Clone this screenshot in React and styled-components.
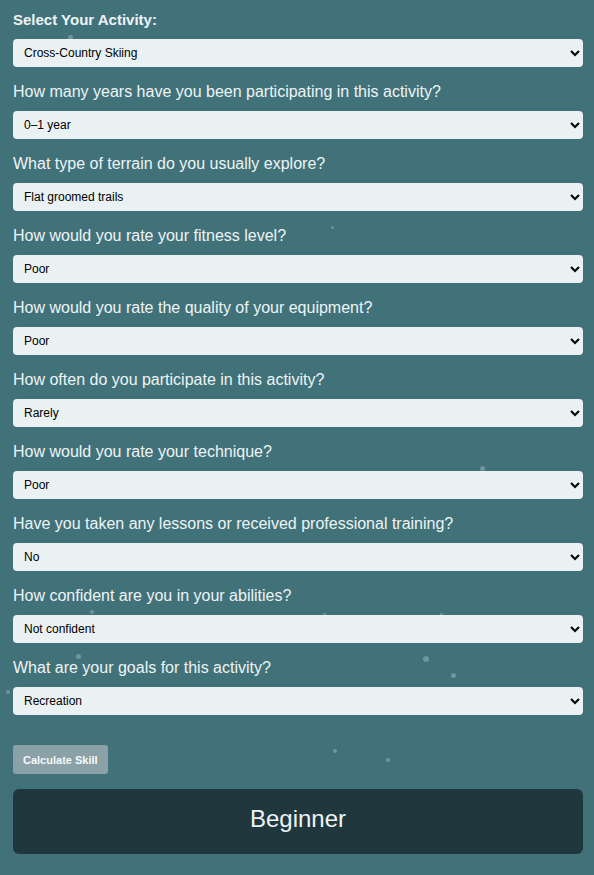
import React, { useState } from "react"
import styled, { createGlobalStyle } from "styled-components"

const GlobalStyle = createGlobalStyle`
  html, body {
    margin: 0;
    padding: 0;
    background: #41727a;
  }
  body {
    font-family: "Liberation Sans", Arial, sans-serif;
  }
`

const questions = [
  {
    label: "How many years have you been participating in this activity?",
    options: ["0–1 year", "1–3 years", "3–5 years", "5+ years"],
  },
  {
    label: "What type of terrain do you usually explore?",
    options: ["Flat groomed trails", "Rolling hills", "Steep backcountry"],
  },
  {
    label: "How would you rate your fitness level?",
    options: ["Poor", "Average", "Good", "Excellent"],
  },
  {
    label: "How would you rate the quality of your equipment?",
    options: ["Poor", "Average", "Good", "Excellent"],
  },
  {
    label: "How often do you participate in this activity?",
    options: ["Rarely", "Monthly", "Weekly", "Daily"],
  },
  {
    label: "How would you rate your technique?",
    options: ["Poor", "Average", "Good", "Excellent"],
  },
  {
    label: "Have you taken any lessons or received professional training?",
    options: ["No", "Yes"],
  },
  {
    label: "How confident are you in your abilities?",
    options: ["Not confident", "Somewhat confident", "Very confident"],
  },
  {
    label: "What are your goals for this activity?",
    options: ["Recreation", "Fitness", "Competition"],
  },
]

const activities = ["Cross-Country Skiing", "Hiking", "Mountain Biking", "Kayaking"]

// faint floating particles in the background
const particles = [
  { x: 68, y: 35, s: 5 },
  { x: 331, y: 226, s: 3 },
  { x: 480, y: 466, s: 5 },
  { x: 90, y: 610, s: 4 },
  { x: 323, y: 613, s: 3 },
  { x: 440, y: 613, s: 3 },
  { x: 76, y: 654, s: 5 },
  { x: 423, y: 656, s: 6 },
  { x: 451, y: 673, s: 5 },
  { x: 6, y: 690, s: 4 },
  { x: 333, y: 749, s: 4 },
  { x: 386, y: 758, s: 4 },
]

const Page = styled.div`
  position: relative;
  min-height: 875px;
  box-sizing: border-box;
  padding: 11px 11px 20px 13px;
  overflow: hidden;
`

const Particle = styled.span`
  position: absolute;
  border-radius: 50%;
  background: rgba(200, 215, 218, 0.35);
  pointer-events: none;
`

const Form = styled.form`
  position: relative;
  display: flex;
  flex-direction: column;
`

const Field = styled.div`
  display: flex;
  flex-direction: column;
  margin-bottom: 16px;
`

const Label = styled.label`
  font-size: ${p => (p.$bold ? "15px" : "16px")};
  line-height: 18px;
  color: #eef4f5;
  font-weight: ${p => (p.$bold ? 700 : 400)};
  margin-bottom: 10px;
`

const Select = styled.select`
  height: 28px;
  width: 100%;
  box-sizing: border-box;
  border: none;
  border-radius: 4px;
  background-color: #eaf1f2;
  color: #000;
  font-family: "Liberation Sans", Arial, sans-serif;
  font-size: 12px;
  padding: 0 4px 0 7px;
  outline: none;
`

const Button = styled.button`
  align-self: flex-start;
  margin-top: 14px;
  height: 29px;
  padding: 0 10px;
  border: none;
  border-radius: 3px;
  background: #8aa2a7;
  color: #f6f9f9;
  font-family: "Liberation Sans", Arial, sans-serif;
  font-size: 11px;
  font-weight: 700;
  cursor: pointer;
`

const Result = styled.div`
  margin-top: 15px;
  height: 65px;
  box-sizing: border-box;
  padding-bottom: 6px;
  display: flex;
  align-items: center;
  justify-content: center;
  background: #20373d;
  border-radius: 6px;
  color: #eef4f5;
  font-size: 24px;
`

const App = () => {
  const [activity, setActivity] = useState(activities[0])
  const [answers, setAnswers] = useState(questions.map(q => q.options[0]))

  return (
    <Page>
      <GlobalStyle />
      {particles.map((p, i) => (
        <Particle
          key={i}
          style={{ left: p.x, top: p.y, width: p.s, height: p.s }}
        />
      ))}
      <Form onSubmit={e => e.preventDefault()}>
        <Field>
          <Label $bold htmlFor="activity">Select Your Activity:</Label>
          <Select
            id="activity"
            value={activity}
            onChange={e => setActivity(e.target.value)}
          >
            {activities.map(a => (
              <option key={a}>{a}</option>
            ))}
          </Select>
        </Field>
        {questions.map((q, index) => (
          <Field key={index}>
            <Label htmlFor={`q${index}`}>{q.label}</Label>
            <Select
              id={`q${index}`}
              value={answers[index]}
              onChange={e => {
                const next = [...answers]
                next[index] = e.target.value
                setAnswers(next)
              }}
            >
              {q.options.map(o => (
                <option key={o}>{o}</option>
              ))}
            </Select>
          </Field>
        ))}
        <Button type="submit">Calculate Skill</Button>
        <Result>Beginner</Result>
      </Form>
    </Page>
  )
}

export default App
